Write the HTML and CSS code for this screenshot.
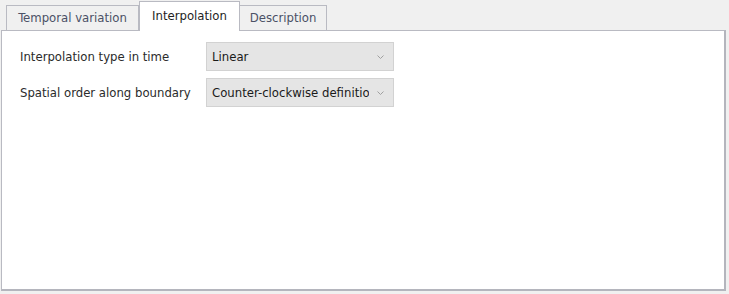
FILE: index.html
```html
<!DOCTYPE html>
<html lang="en">
<head>
  <meta charset="UTF-8">
  <title>Interpolation</title>
  <link rel="stylesheet" href="styles.css">
</head>
<body>

<div class="tabs">
  <div class="tab">Temporal variation</div>
  <div class="tab active">Interpolation</div>
  <div class="tab">Description</div>
</div>

<div class="panel">
  <div class="row">
    <label class="label">Interpolation type in time</label>
    <div class="combo">
      <span class="combo-text">Linear</span>
      <svg class="chevron" width="7" height="4" viewBox="0 0 7 4"><path d="M0.5 0.5 L3.5 3.5 L6.5 0.5" fill="none" stroke="#a0a0a0" stroke-width="1"/></svg>
    </div>
  </div>
  <div class="row">
    <label class="label">Spatial order along boundary</label>
    <div class="combo">
      <span class="combo-text">Counter-clockwise definition</span>
      <svg class="chevron" width="7" height="4" viewBox="0 0 7 4"><path d="M0.5 0.5 L3.5 3.5 L6.5 0.5" fill="none" stroke="#a0a0a0" stroke-width="1"/></svg>
    </div>
  </div>
</div>

</body>
</html>
```

FILE: styles.css
```css
body {
  margin: 0;
  width: 729px;
  height: 294px;
  background-color: #f0f0f0;
  font-family: "DejaVu Sans Condensed", "DejaVu Sans", sans-serif;
  font-size: 13px;
  overflow: hidden;
}

.tabs {
  display: flex;
  align-items: flex-end;
  height: 30px;
  padding-left: 6px;
}

.tab {
  height: 25px;
  line-height: 24px;
  padding: 0 4px;
  border: 1px solid #b9bac2;
  border-bottom: none;
  background-color: #f0f0f0;
  color: #4b5166;
  box-sizing: border-box;
  width: 133px;
  text-align: center;
  white-space: nowrap;
}

.tab + .tab {
  border-left: none;
}

.tab.active {
  width: 101px;
  height: 30px;
  line-height: 28px;
  background-color: #fff;
  color: #1e1e1e;
  border-left: 1px solid #b9bac2;
  margin-bottom: -1px;
  position: relative;
  z-index: 1;
}

.tab.active + .tab {
  width: 87px;
}

.panel {
  margin-left: 1px;
  width: 725px;
  height: 261px;
  background-color: #fff;
  border: 1px solid #b9bac2;
  border-right: 2px solid #b4b5bd;
  border-bottom: 2px solid #b4b5bd;
  padding: 11px 0 0 18px;
  box-sizing: border-box;
}

.row {
  display: flex;
  align-items: center;
  margin-bottom: 7px;
}

.label {
  width: 186px;
  color: #2b2b2b;
}

.combo {
  display: flex;
  align-items: center;
  width: 188px;
  height: 29px;
  box-sizing: border-box;
  background-color: #e5e5e5;
  border: 1px solid #d2d2d2;
  padding: 0 9px 0 5px;
}

.combo-text {
  flex: 1;
  white-space: nowrap;
  overflow: hidden;
  color: #1a1a1a;
}

.chevron {
  margin-left: 8px;
  flex-shrink: 0;
}
```
